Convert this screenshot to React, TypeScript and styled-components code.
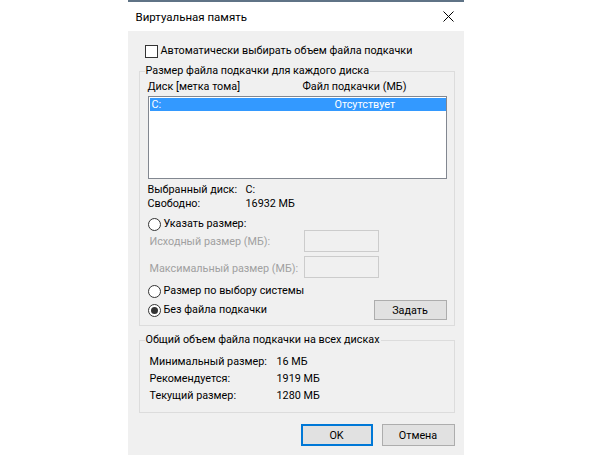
import React, { FC } from "react"
import styled, { createGlobalStyle } from "styled-components"

const GlobalStyle = createGlobalStyle`
    html, body {
        margin: 0;
        padding: 0;
        background: #ffffff;
    }
    body {
        font-family: Roboto, "Noto Sans", "Liberation Sans", sans-serif;
        font-size: 10.8px;
        color: #000000;
        white-space: nowrap;
    }
`

const Page = styled.div`
    display: flex;
    justify-content: center;
    align-items: flex-start;
    width: 591px;
    height: 455px;
    overflow: hidden;
`

const Window = styled.div`
    width: 336px;
    border-top: 2px solid #5f7386;
    display: flex;
    flex-direction: column;
    flex-shrink: 0;
`

const TitleBar = styled.div`
    height: 29px;
    flex-shrink: 0;
    background: #ffffff;
    display: flex;
    align-items: center;
    justify-content: space-between;
    padding: 0 9px 0 8px;
`

const Title = styled.span`
    font-size: 11.5px;
    line-height: 16px;
    margin-top: 1px;
`

const CloseButton = styled.div`
    width: 12px;
    height: 12px;
    display: flex;
    align-items: center;
    justify-content: center;
`

const Body = styled.div`
    background: #f0f0f0;
    height: 424px;
    flex-shrink: 0;
    padding: 13px 9px 0 11px;
`

const CheckRow = styled.label`
    display: flex;
    align-items: center;
    gap: 3px;
    margin-left: 6px;
    height: 14px;
    line-height: 14px;
`

const CheckBox = styled.span`
    width: 11px;
    height: 11px;
    border: 1px solid #333333;
    background: #ffffff;
    flex-shrink: 0;
`

const GroupBox = styled.fieldset<{ $top: number; $bottom: number }>`
    margin: ${(p) => p.$top}px 0 0 0;
    padding: 0 7px ${(p) => p.$bottom}px 8px;
    border: 1px solid #dcdcdc;
    min-width: 0;
`

const Legend = styled.legend`
    padding: 0 1px;
    margin-left: -3px;
    line-height: 16px;
`

const ListHeader = styled.div`
    display: grid;
    grid-template-columns: 155px 1fr;
    line-height: 16px;
`

const ListBox = styled.div`
    margin-top: 1px;
    height: 80px;
    border: 1px solid #828790;
    background: #ffffff;
    padding: 1px 0 0 1px;
`

const ListRow = styled.div<{ $selected?: boolean }>`
    display: grid;
    grid-template-columns: 183px 1fr;
    height: 13px;
    line-height: 13px;
    padding-left: 2px;
    background: ${(p) => (p.$selected ? "#3399ff" : "transparent")};
    color: ${(p) => (p.$selected ? "#ffffff" : "#000000")};
`

const InfoGrid = styled.div`
    display: grid;
    grid-template-columns: 98px 1fr;
    line-height: 14px;
    margin-top: 4px;
`

const RadioRow = styled.label<{ $top: number }>`
    display: flex;
    align-items: center;
    gap: 3px;
    height: 14px;
    line-height: 14px;
    margin-top: ${(p) => p.$top}px;
`

const Radio = styled.span<{ $checked?: boolean }>`
    width: 11px;
    height: 11px;
    border: 1px solid #333333;
    border-radius: 50%;
    background: #ffffff;
    flex-shrink: 0;
    display: flex;
    align-items: center;
    justify-content: center;

    &::after {
        content: "";
        display: ${(p) => (p.$checked ? "block" : "none")};
        width: 7px;
        height: 7px;
        border-radius: 50%;
        background: #333333;
    }
`

const SizeGrid = styled.div`
    display: grid;
    grid-template-columns: 156px 75px;
    row-gap: 4px;
    margin-top: -1px;
    align-items: center;
`

const DisabledLabel = styled.span<{ $shift?: number }>`
    color: #a0a0a0;
    padding-left: 2px;
    margin-top: ${(p) => p.$shift || 0}px;
`

const DisabledInput = styled.div`
    height: 20px;
    border: 1px solid #cccccc;
    background: #f0f0f0;
`

const LastRow = styled.div`
    display: flex;
    align-items: center;
    justify-content: space-between;
    margin-top: 2px;
    height: 20px;
`

const Button = styled.button<{ $default?: boolean; $width: number; $height: number }>`
    width: ${(p) => p.$width}px;
    height: ${(p) => p.$height}px;
    padding: 0;
    font-family: inherit;
    font-size: 10.8px;
    color: #000000;
    background: #e1e1e1;
    border: ${(p) => (p.$default ? "2px solid #0078d7" : "1px solid #adadad")};
    box-sizing: border-box;
`

const SummaryGrid = styled.div`
    display: grid;
    grid-template-columns: 127px 1fr;
    line-height: 17px;
    margin-top: 5px;
    padding-left: 2px;
`

const ButtonBar = styled.div`
    display: flex;
    justify-content: flex-end;
    gap: 9px;
    margin-top: 11px;
`

const CloseIcon: FC = () => (
    <svg width="11" height="11" viewBox="0 0 11 11">
        <path d="M0.5 0.5 L10.5 10.5 M10.5 0.5 L0.5 10.5" stroke="#000000" strokeWidth="1" fill="none" />
    </svg>
)

const App: FC = () => (
    <Page>
        <GlobalStyle />
        <Window>
            <TitleBar>
                <Title>Виртуальная память</Title>
                <CloseButton>
                    <CloseIcon />
                </CloseButton>
            </TitleBar>
            <Body>
                <CheckRow>
                    <CheckBox />
                    Автоматически выбирать объем файла подкачки
                </CheckRow>
                <GroupBox $top={5} $bottom={5}>
                    <Legend>Размер файла подкачки для каждого диска</Legend>
                    <ListHeader>
                        <span>Диск [метка тома]</span>
                        <span>Файл подкачки (МБ)</span>
                    </ListHeader>
                    <ListBox>
                        <ListRow $selected>
                            <span>C:</span>
                            <span>Отсутствует</span>
                        </ListRow>
                    </ListBox>
                    <InfoGrid>
                        <span>Выбранный диск:</span>
                        <span>C:</span>
                        <span>Свободно:</span>
                        <span>16932 МБ</span>
                    </InfoGrid>
                    <RadioRow $top={6}>
                        <Radio />
                        Указать размер:
                    </RadioRow>
                    <SizeGrid>
                        <DisabledLabel>Исходный размер (МБ):</DisabledLabel>
                        <DisabledInput />
                        <DisabledLabel $shift={3}>Максимальный размер (МБ):</DisabledLabel>
                        <DisabledInput />
                    </SizeGrid>
                    <RadioRow $top={6}>
                        <Radio />
                        Размер по выбору системы
                    </RadioRow>
                    <LastRow>
                        <RadioRow $top={0}>
                            <Radio $checked />
                            Без файла подкачки
                        </RadioRow>
                        <Button type="button" $width={73} $height={20}>Задать</Button>
                    </LastRow>
                </GroupBox>
                <GroupBox $top={6} $bottom={8}>
                    <Legend>Общий объем файла подкачки на всех дисках</Legend>
                    <SummaryGrid>
                        <span>Минимальный размер:</span>
                        <span>16 МБ</span>
                        <span>Рекомендуется:</span>
                        <span>1919 МБ</span>
                        <span>Текущий размер:</span>
                        <span>1280 МБ</span>
                    </SummaryGrid>
                </GroupBox>
                <ButtonBar>
                    <Button type="button" $default $width={72} $height={22}>OK</Button>
                    <Button type="button" $width={73} $height={22}>Отмена</Button>
                </ButtonBar>
            </Body>
        </Window>
    </Page>
)

export default App
